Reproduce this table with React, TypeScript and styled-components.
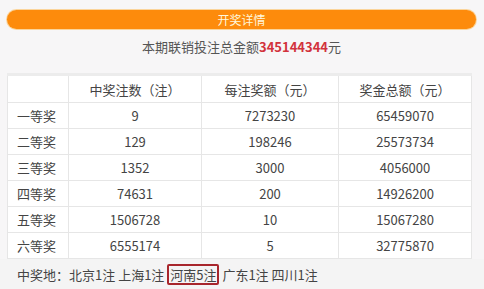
import React from "react";
import styled, { createGlobalStyle } from "styled-components";

const Global = createGlobalStyle`
  html, body { margin: 0; padding: 0; background: #f7f6f7; }
  body { font-family: "Noto Sans CJK SC", "Noto Sans", sans-serif; color: #444; }
`;

const Page = styled.div`
  width: 484px;
  height: 289px;
  overflow: hidden;
  padding: 10px 0 0 7px;
  box-sizing: border-box;
  display: flex;
  flex-direction: column;
`;

const Banner = styled.div`
  width: 469px;
  height: 19px;
  border-radius: 10px;
  background: #fd8b0c;
  box-shadow: 0 0 0 1px #fbd49a;
  color: #fff7dc;
  font-size: 12px;
  line-height: 19px;
  text-align: center;
`;

const Summary = styled.div`
  width: 469px;
  margin-top: 9px;
  font-size: 13px;
  line-height: 18px;
  color: #555;
  text-align: center;
`;

const Amount = styled.span`
  color: #d2323c;
  font-weight: 700;
`;

const Table = styled.div`
  margin-top: 17px;
  width: 465px;
  background: #fff;
  border-top: 3px solid #ececec;
  display: grid;
  grid-template-columns: 61px 133px 137px 134px;
`;

const Cell = styled.div<{ $head?: boolean; $label?: boolean }>`
  height: ${(p) => (p.$head ? 26 : 25)}px;
  border-bottom: 1px solid #e6e6e6;
  border-left: 1px solid #e6e6e6;
  display: flex;
  align-items: center;
  justify-content: ${(p) => (p.$label ? "flex-start" : "center")};
  padding-left: ${(p) => (p.$label ? "9px" : "0")};
  font-size: 13px;
  color: #444;
  &:nth-child(4n) { border-right: 1px solid #e6e6e6; }
`;

const Footer = styled.div`
  margin-left: -7px;
  width: 484px;
  flex: 1;
  background: #f4f4f4;
  display: flex;
  align-items: center;
  padding-left: 17px;
  box-sizing: border-box;
  font-size: 13px;
  color: #444;
  white-space: pre;
`;

const Marked = styled.span`
  border: 2px solid #a8262c;
  border-radius: 2px;
  padding: 0 1px;
  line-height: 17px;
`;

const rows: [string, string, string, string][] = [
  ["一等奖", "9", "7273230", "65459070"],
  ["二等奖", "129", "198246", "25573734"],
  ["三等奖", "1352", "3000", "4056000"],
  ["四等奖", "74631", "200", "14926200"],
  ["五等奖", "1506728", "10", "15067280"],
  ["六等奖", "6555174", "5", "32775870"],
];

export default function App() {
  return (
    <>
      <Global />
      <Page>
        <Banner>开奖详情</Banner>
        <Summary>
          本期联销投注总金额<Amount>345144344</Amount>元
        </Summary>
        <Table>
          <Cell $head />
          <Cell $head>中奖注数（注）</Cell>
          <Cell $head>每注奖额（元）</Cell>
          <Cell $head>奖金总额（元）</Cell>
          {rows.map((r) =>
            r.map((v, i) => (
              <Cell key={r[0] + i} $label={i === 0}>
                {v}
              </Cell>
            ))
          )}
        </Table>
        <Footer>
          中奖地：北京1注 上海1注 <Marked>河南5注</Marked> 广东1注 四川1注
        </Footer>
      </Page>
    </>
  );
}
